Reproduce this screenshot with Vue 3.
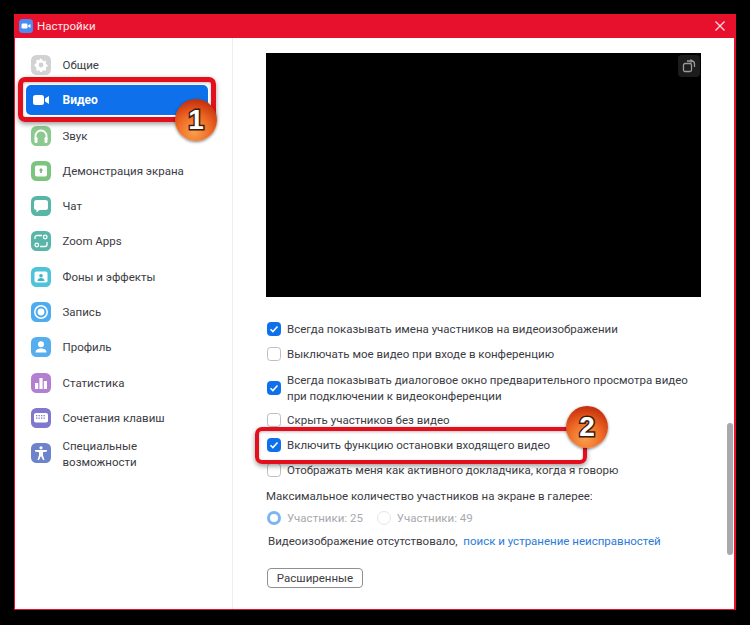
<script setup>
const navItems = [
  { label: 'Общие', color: '#d2d2d2', icon: '<path fill="#fff" d="M10 4.500l1.200.2.500 1.400 1.300.6 1.400-.6 1.200 1.200-.6 1.400.5 1.300 1.500.6v1.700l-1.500.5-.5 1.300.6 1.400-1.200 1.200-1.400-.6-1.300.5-.5 1.400H9.300l-.5-1.400-1.300-.5-1.400.6-1.200-1.200.6-1.400-.5-1.300-1.500-.5V9.700l1.500-.6.5-1.300-.6-1.400 1.200-1.200 1.400.6 1.300-.6.5-1.400z" transform="translate(.3 -.3) scale(.96)"/><circle cx="10" cy="10" r="2.400" fill="#d2d2d2"/>' },
  { label: 'Видео', active: true, color: 'transparent', icon: '<rect x="2" y="5" width="11" height="10" rx="2.500" fill="#fff"/><path fill="#fff" d="M14 8.600l4-2.600v8l-4-2.600z"/>' },
  { label: 'Звук', color: '#8bc98f', icon: '<path fill="none" stroke="#fff" stroke-width="1.800" d="M4.500 13v-3a5.500 5.500 0 0 1 11 0v3"/><rect x="3.500" y="11" width="3" height="6" rx="1.200" fill="#fff"/><rect x="13.500" y="11" width="3" height="6" rx="1.200" fill="#fff"/>' },
  { label: 'Демонстрация экрана', color: '#7cc47f', icon: '<rect x="4" y="4.500" width="12" height="11" rx="1.800" fill="#fff"/><path fill="#6fb472" d="M10 7l2.200 2.600h-1.400V12H9.200V9.600H7.800z"/>' },
  { label: 'Чат', color: '#58b6a4', icon: '<path fill="#fff" d="M5.500 4h9A2.500 2.500 0 0 1 17 6.500v5a2.500 2.500 0 0 1-2.500 2.500H8.500L5.500 16.500V14A2.500 2.500 0 0 1 3 11.500v-5A2.500 2.500 0 0 1 5.500 4z"/>' },
  { label: 'Zoom Apps', color: '#58b6a8', icon: '<g fill="none" stroke="#fff" stroke-width="1.300"><path d="M4 8V6.500A2 2 0 0 1 6 4.500h5M16 11v2.500a2 2 0 0 1-2 2H9"/><circle cx="14.200" cy="6" r="1.800"/><circle cx="5.800" cy="14" r="1.800"/></g>' },
  { label: 'Фоны и эффекты', color: '#4fc3d9', icon: '<rect x="3.500" y="4.500" width="13" height="11" rx="1.800" fill="#fff"/><circle cx="10" cy="8.800" r="1.800" fill="#3fb3c9"/><path fill="#3fb3c9" d="M6.500 14c0-2 1.500-3 3.500-3s3.500 1 3.500 3z"/>' },
  { label: 'Запись', color: '#4dabf0', icon: '<circle cx="10" cy="10" r="6.200" fill="none" stroke="#fff" stroke-width="1.500"/><circle cx="10" cy="10" r="3.400" fill="#fff"/>' },
  { label: 'Профиль', color: '#57aeef', icon: '<circle cx="10" cy="7.200" r="3" fill="#fff"/><path fill="#fff" d="M4.500 15.500c0-2.800 2.500-4 5.500-4s5.500 1.200 5.500 4z"/>' },
  { label: 'Статистика', color: '#b37fcf', icon: '<rect x="4" y="10" width="3.200" height="6" fill="#fff"/><rect x="8.400" y="5" width="3.200" height="11" fill="#fff"/><rect x="12.800" y="8" width="3.200" height="8" fill="#fff"/>' },
  { label: 'Сочетания клавиш', color: '#7f78cc', icon: '<rect x="3" y="5" width="14" height="9.500" rx="1.800" fill="#fff"/><g fill="#7f78cc"><rect x="5" y="7" width="1.300" height="1.300"/><rect x="7.500" y="7" width="1.300" height="1.300"/><rect x="10" y="7" width="1.300" height="1.300"/><rect x="12.500" y="7" width="1.300" height="1.300"/><rect x="5" y="9.500" width="1.300" height="1.300"/><rect x="7.500" y="9.500" width="1.300" height="1.300"/><rect x="10" y="9.500" width="1.300" height="1.300"/><rect x="12.500" y="9.500" width="1.300" height="1.300"/></g>' },
  { label: 'Специальные возможности', wrap: true, color: '#6d83cb', icon: '<circle cx="10" cy="4.800" r="1.600" fill="#fff"/><path fill="#fff" d="M4 7h12v1.500l-4 .8v3l1.500 4.700H12l-2-4-2 4H6.500L8 12.300v-3l-4-.8z"/>' },
]

const options = [
  { text: 'Всегда показывать имена участников на видеоизображении', checked: true },
  { text: 'Выключать мое видео при входе в конференцию', checked: false },
  { text: 'Всегда показывать диалоговое окно предварительного просмотра видео при подключении к видеоконференции', checked: true, tall: true },
  { text: 'Скрыть участников без видео', checked: false },
  { text: 'Включить функцию остановки входящего видео', checked: true },
  { text: 'Отображать меня как активного докладчика, когда я говорю', checked: false },
]
</script>

<template>
  <div class="page">
    <div class="window">
      <header class="titlebar">
        <svg class="logo" width="14" height="14" viewBox="0 0 14 14">
          <rect width="14" height="14" rx="3.500" fill="#4a8cf0" />
          <rect x="2.500" y="4.500" width="6" height="5" rx="1.200" fill="#fff" />
          <path d="M9 6.500l2.500-1.500v4L9 7.500z" fill="#fff" />
        </svg>
        <span class="title">Настройки</span>
        <svg class="close" width="10" height="10" viewBox="0 0 10 10">
          <path d="M.5.5l9 9M9.500.5l-9 9" stroke="#ffd9d9" stroke-width="1.300" />
        </svg>
      </header>

      <div class="body">
        <nav class="sidebar">
          <div
            v-for="item in navItems"
            :key="item.label"
            class="nav-item"
            :class="{ active: item.active }"
          >
            <svg class="nav-icon" width="20" height="20" viewBox="0 0 20 20">
              <rect width="20" height="20" rx="5.500" :fill="item.color" />
              <g v-html="item.icon"></g>
            </svg>
            <span class="nav-label" :class="{ wrap: item.wrap }">{{ item.label }}</span>
          </div>
        </nav>

        <main class="content">
          <div class="video">
            <div class="rotate">
              <svg width="16" height="16" viewBox="0 0 16 16" fill="none" stroke="#9a9a9a" stroke-width="1.300">
                <rect x="2.500" y="5.500" width="8" height="8" rx="1.500" />
                <path d="M6 3h4.500A3 3 0 0 1 13.500 6v3" />
                <path d="M9.500 1.500L11 3 9.500 4.500" />
              </svg>
            </div>
          </div>

          <div class="options">
            <label v-for="opt in options" :key="opt.text" class="option" :class="{ tall: opt.tall }">
              <span class="check" :class="{ on: opt.checked }">
                <svg v-if="opt.checked" width="10" height="10" viewBox="0 0 10 10">
                  <path d="M1.500 5.200l2.400 2.400 4.600-5" fill="none" stroke="#fff" stroke-width="1.500" />
                </svg>
              </span>
              <span class="option-text">{{ opt.text }}</span>
            </label>
          </div>

          <div class="gallery-label">Максимальное количество участников на экране в галерее:</div>

          <div class="radios">
            <span class="radio-wrap"><span class="radio on"></span>Участники: 25</span>
            <span class="radio-wrap"><span class="radio"></span>Участники: 49</span>
          </div>

          <div class="trouble">
            Видеоизображение отсутствовало,
            <a class="link">поиск и устранение неисправностей</a>
          </div>

          <button class="advanced">Расширенные</button>
        </main>

        <div class="scrollbar"><div class="thumb"></div></div>
      </div>
    </div>

    <div class="mark mark-one"></div>
    <div class="mark mark-two"></div>
    <div class="badge badge-one">1</div>
    <div class="badge badge-two">2</div>
  </div>
</template>

<style scoped>
.page {
  position: relative;
  width: 750px;
  height: 625px;
  box-sizing: border-box;
  padding: 14px 14px 15px;
  background: #000;
  font-family: Roboto, "Open Sans", sans-serif;
  font-size: 11.500px;
  color: #3c3c44;
  overflow: hidden;
}
.window {
  height: 100%;
  display: flex;
  flex-direction: column;
  background: #fff;
  border: solid #e8112d;
  border-width: 0 2px 1.500px 1.500px;
  box-sizing: border-box;
}
.titlebar {
  flex: 0 0 24px;
  display: flex;
  align-items: center;
  padding: 0 9px 0 4px;
  background: #e8112d;
  color: #ffe9ea;
}
.logo { margin-right: 4px; }
.title { flex: 1; }
.body {
  flex: 1;
  display: flex;
  min-height: 0;
}
.sidebar {
  flex: 0 0 218px;
  box-sizing: border-box;
  padding: 12px 24px 0 10.500px;
  border-right: 1px solid #eeeeee;
  display: flex;
  flex-direction: column;
  gap: 5.300px;
}
.nav-item {
  height: 30px;
  display: flex;
  align-items: center;
  gap: 12px;
  padding-left: 5px;
  border-radius: 5px;
  flex: none;
}
.nav-item.active {
  background: #0e71eb;
  color: #fff;
  font-weight: 700;
  font-size: 12px;
}
.nav-icon { flex: none; }
.nav-label { line-height: 16px; white-space: nowrap; }
.nav-label.wrap {
  white-space: normal;
  width: 90px;
  padding-top: 2px;
}
.content {
  flex: 1;
  padding: 15px 0 0 33px;
  min-width: 0;
}
.video {
  position: relative;
  width: 435px;
  height: 244px;
  background: #000;
}
.rotate {
  position: absolute;
  top: 2px;
  right: 1px;
  width: 22px;
  height: 22px;
  display: flex;
  align-items: center;
  justify-content: center;
  background: #1c1c1c;
  border-radius: 4px;
}
.options {
  margin-top: 24px;
  display: flex;
  flex-direction: column;
  gap: 9px;
  width: 436px;
}
.option {
  min-height: 16px;
  display: flex;
  align-items: center;
  gap: 6px;
  padding-left: 1px;
}
.option.tall { margin: 1px 0 -1px; }
.option-text { line-height: 16px; }
.check {
  flex: none;
  width: 14px;
  height: 14px;
  box-sizing: border-box;
  border: 1px solid #bdbdc3;
  border-radius: 3.500px;
  background: #fff;
  display: flex;
  align-items: center;
  justify-content: center;
}
.check.on {
  background: #0e71eb;
  border-color: #0e71eb;
}
.gallery-label {
  margin-top: 10px;
  line-height: 16px;
}
.radios {
  margin-top: 6px;
  height: 16px;
  display: flex;
  align-items: center;
  gap: 13px;
  color: #a9a9ae;
}
.radio-wrap {
  display: flex;
  align-items: center;
  gap: 6px;
  padding-left: 1px;
}
.radio {
  width: 14px;
  height: 14px;
  box-sizing: border-box;
  border: 1px solid #e6e6e8;
  border-radius: 50%;
  background: #fff;
}
.radio.on { border: 3.500px solid #7db5f2; }
.trouble {
  margin-top: 7px;
  padding-left: 2px;
  line-height: 16px;
}
.link {
  color: #2d7bd8;
  margin-left: 3px;
}
.advanced {
  display: block;
  margin: 19px 0 0 1px;
  width: 96px;
  height: 20px;
  padding: 0;
  background: #fff;
  border: 1px solid #8f8f95;
  border-radius: 4px;
  font: inherit;
  color: #3c3c44;
}
.scrollbar {
  flex: 0 0 8px;
  padding: 385px 1px 0;
  box-sizing: border-box;
}
.thumb {
  width: 6px;
  height: 132px;
  background: #a9a9ad;
  border-radius: 3px;
}
.mark {
  position: absolute;
  box-sizing: border-box;
  border: 4px solid #e30f1c;
  border-radius: 7px;
  box-shadow: 0 2px 5px rgba(0, 0, 0, .4), inset 0 1px 3px rgba(0, 0, 0, .25);
}
.mark-one { left: 18px; top: 77px; width: 198px; height: 45px; border-width: 5px; }
.mark-two { left: 255px; top: 427px; width: 332px; height: 37px; }
.badge {
  position: absolute;
  width: 42px;
  height: 42px;
  border-radius: 50%;
  display: flex;
  align-items: center;
  justify-content: center;
  background: radial-gradient(circle at 45% 78%, #f9a04d 0%, #ee6a24 42%, #c8320f 78%, #a8260b 100%);
  box-shadow: 0 1px 3px rgba(0, 0, 0, .5);
  font-family: "Liberation Sans", sans-serif;
  font-size: 28px;
  font-weight: 700;
  color: #fff;
  -webkit-text-stroke: 3px #3c1a0c;
  paint-order: stroke fill;
}
.badge-one { left: 175px; top: 99px; }
.badge-two { left: 566px; top: 406px; }
</style>
